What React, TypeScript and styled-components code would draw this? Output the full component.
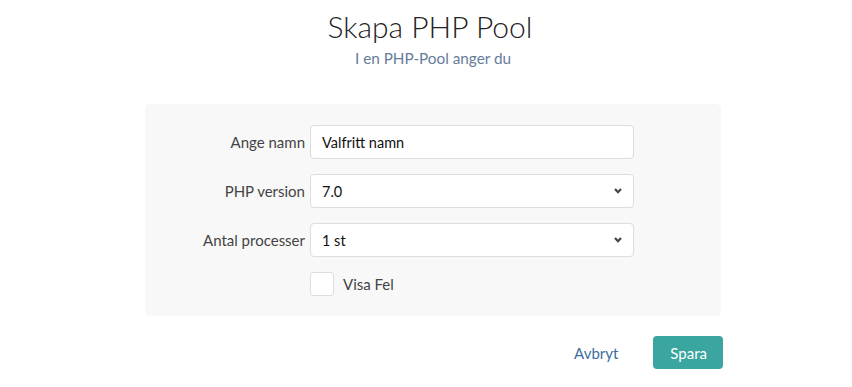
import React from 'react'
import styled, { createGlobalStyle } from 'styled-components'

const GlobalStyle = createGlobalStyle`
  html, body {
    margin: 0;
    padding: 0;
    background: #ffffff;
    font-family: Lato, "Noto Sans", sans-serif;
    color: #333333;
  }
`

const Page = styled.div`
  width: 576px;
  margin: 0 auto;
  padding-top: 6px;
  transform: translateX(7px);
`

const Header = styled.div`
  text-align: center;
  margin-bottom: 36px;
`

const Title = styled.h1`
  margin: 0;
  font-size: 30px;
  font-weight: 300;
  line-height: 40px;
  color: #222222;
  transform: translateX(-3px);
`

const Subtitle = styled.p`
  margin: 2px 0 0;
  font-size: 15.3px;
  line-height: 20px;
  color: #667c99;
`

const Card = styled.div`
  background: #f8f8f8;
  border-radius: 5px;
  padding: 21px 0 20px;
  display: flex;
  flex-direction: column;
  gap: 15px;
`

const Row = styled.div`
  display: grid;
  grid-template-columns: 160px 324px;
  column-gap: 5px;
  align-items: center;
`

const Label = styled.label`
  text-align: right;
  font-size: 15px;
  color: #444444;
`

const TextInput = styled.input`
  box-sizing: border-box;
  height: 34px;
  width: 100%;
  border: 1px solid #dddddd;
  border-radius: 4px;
  background: #ffffff;
  padding: 0 11px;
  font-family: inherit;
  font-size: 14.5px;
  color: #111111;
  outline: none;
`

const SelectBox = styled.div`
  position: relative;
  box-sizing: border-box;
  height: 34px;
  border: 1px solid #dddddd;
  border-radius: 4px;
  background: #ffffff;
  padding: 0 11px 0 11px;
  display: flex;
  align-items: center;
  justify-content: space-between;
  font-size: 14.5px;
  color: #111111;
`

const CheckRow = styled.div`
  display: flex;
  align-items: center;
  gap: 9px;
  margin-left: 165px;
  margin-top: 0;
`

const CheckBox = styled.span`
  box-sizing: border-box;
  width: 24px;
  height: 24px;
  border: 1px solid #dddddd;
  border-radius: 3px;
  background: #ffffff;
`

const CheckLabel = styled.span`
  font-size: 15px;
  color: #444444;
`

const Actions = styled.div`
  display: flex;
  justify-content: flex-end;
  align-items: center;
  gap: 35px;
  margin-top: 20px;
  margin-right: -2px;
`

const LinkButton = styled.button`
  border: 0;
  background: none;
  font-family: inherit;
  font-size: 15px;
  color: #3e6c9c;
  padding: 0;
  cursor: pointer;
`

const PrimaryButton = styled.button`
  border: 0;
  border-radius: 4px;
  background: #3ba6a0;
  color: #ffffff;
  font-family: inherit;
  font-size: 15px;
  height: 33px;
  padding: 0 16px 0 17px;
  cursor: pointer;
`

const Chevron = () => (
  <svg width="8" height="6" viewBox="0 0 8 6">
    <path d="M1 1 L4 4.2 L7 1" stroke="#444" strokeWidth="2.2" fill="none" />
  </svg>
)

const Select = ({ value }: { value: string }) => (
  <SelectBox>
    <span>{value}</span>
    <Chevron />
  </SelectBox>
)

export default function App() {
  return (
    <>
      <GlobalStyle />
      <Page>
        <Header>
          <Title>Skapa PHP Pool</Title>
          <Subtitle>I en PHP-Pool anger du</Subtitle>
        </Header>
        <Card>
          <Row>
            <Label>Ange namn</Label>
            <TextInput defaultValue="Valfritt namn" />
          </Row>
          <Row>
            <Label>PHP version</Label>
            <Select value="7.0" />
          </Row>
          <Row>
            <Label>Antal processer</Label>
            <Select value="1 st" />
          </Row>
          <CheckRow>
            <CheckBox />
            <CheckLabel>Visa Fel</CheckLabel>
          </CheckRow>
        </Card>
        <Actions>
          <LinkButton>Avbryt</LinkButton>
          <PrimaryButton>Spara</PrimaryButton>
        </Actions>
      </Page>
    </>
  )
}
